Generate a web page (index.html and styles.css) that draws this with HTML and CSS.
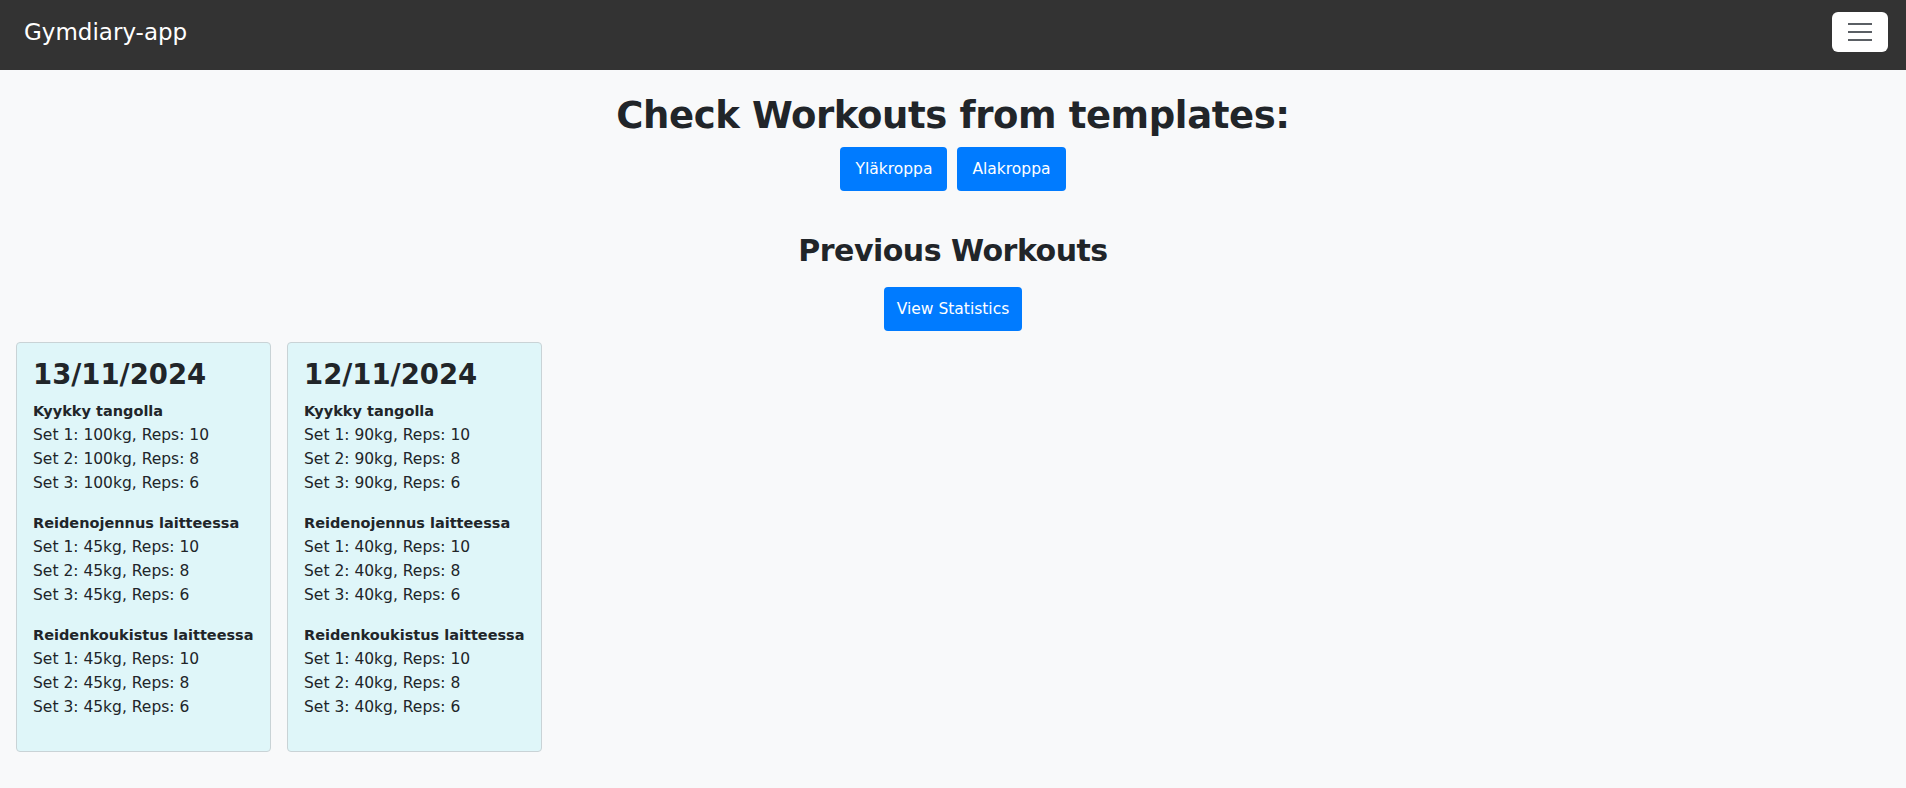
FILE: index.html
```html
<!DOCTYPE html>
<html lang="en">
<head>
<meta charset="utf-8">
<title>Gymdiary-app</title>
<link rel="stylesheet" href="styles.css">
</head>
<body>
<nav class="navbar">
  <span class="brand">Gymdiary-app</span>
  <button class="toggler" aria-label="Toggle navigation">
    <svg width="24" height="18" viewBox="0 0 24 18"><path d="M0 1h24M0 9h24M0 17h24" stroke="#5a5f64" stroke-width="2"/></svg>
  </button>
</nav>
<main class="main">
  <h1 class="title">Check Workouts from templates:</h1>
  <div class="btn-row">
    <button class="btn">Yläkroppa</button>
    <button class="btn">Alakroppa</button>
  </div>
  <h2 class="subtitle">Previous Workouts</h2>
  <div class="btn-row">
    <button class="btn btn-stats">View Statistics</button>
  </div>
  <div class="cards">
    <div class="card">
      <h3 class="date">13/11/2024</h3>
      <div class="exercise">
        <div class="ex-name">Kyykky tangolla</div>
        <div class="set">Set 1: 100kg, Reps: 10</div>
        <div class="set">Set 2: 100kg, Reps: 8</div>
        <div class="set">Set 3: 100kg, Reps: 6</div>
      </div>
      <div class="exercise">
        <div class="ex-name">Reidenojennus laitteessa</div>
        <div class="set">Set 1: 45kg, Reps: 10</div>
        <div class="set">Set 2: 45kg, Reps: 8</div>
        <div class="set">Set 3: 45kg, Reps: 6</div>
      </div>
      <div class="exercise">
        <div class="ex-name">Reidenkoukistus laitteessa</div>
        <div class="set">Set 1: 45kg, Reps: 10</div>
        <div class="set">Set 2: 45kg, Reps: 8</div>
        <div class="set">Set 3: 45kg, Reps: 6</div>
      </div>
    </div>
    <div class="card">
      <h3 class="date">12/11/2024</h3>
      <div class="exercise">
        <div class="ex-name">Kyykky tangolla</div>
        <div class="set">Set 1: 90kg, Reps: 10</div>
        <div class="set">Set 2: 90kg, Reps: 8</div>
        <div class="set">Set 3: 90kg, Reps: 6</div>
      </div>
      <div class="exercise">
        <div class="ex-name">Reidenojennus laitteessa</div>
        <div class="set">Set 1: 40kg, Reps: 10</div>
        <div class="set">Set 2: 40kg, Reps: 8</div>
        <div class="set">Set 3: 40kg, Reps: 6</div>
      </div>
      <div class="exercise">
        <div class="ex-name">Reidenkoukistus laitteessa</div>
        <div class="set">Set 1: 40kg, Reps: 10</div>
        <div class="set">Set 2: 40kg, Reps: 8</div>
        <div class="set">Set 3: 40kg, Reps: 6</div>
      </div>
    </div>
  </div>
</main>
</body>
</html>
```

FILE: styles.css
```css
* { box-sizing: border-box; }
html, body { margin: 0; padding: 0; }
body {
  background: #f8f9fa;
  color: #212529;
  font-family: "DejaVu Sans", "Liberation Sans", sans-serif;
  font-size: 15.5px;
  line-height: 1.5;
}
.navbar {
  height: 70px;
  background: #333333;
  display: flex;
  align-items: flex-start;
  justify-content: space-between;
  padding: 12px 18px 0 24px;
}
.brand {
  color: #ffffff;
  font-size: 23px;
  line-height: 40px;
}
.toggler {
  width: 56px;
  height: 40px;
  background: #ffffff;
  border: none;
  border-radius: 6px;
  display: flex;
  align-items: center;
  justify-content: center;
  padding: 0;
}
.main {
  display: flex;
  flex-direction: column;
  align-items: center;
  padding: 22px 16px 0;
}
.title {
  margin: 0 0 7px;
  font-size: 37px;
  letter-spacing: -0.4px;
  line-height: 48px;
  font-weight: bold;
}
.btn-row {
  display: flex;
  gap: 10px;
}
.btn {
  background: #007bff;
  color: #ffffff;
  border: none;
  border-radius: 4px;
  font-family: inherit;
  font-size: 15.5px;
  line-height: 24px;
  padding: 10px 15px;
  height: 44px;
}
.btn-stats {
  padding: 10px 13px;
}
.subtitle {
  margin: 41px 0 17px;
  font-size: 30px;
  letter-spacing: -0.5px;
  line-height: 38px;
  font-weight: bold;
}
.cards {
  align-self: stretch;
  display: flex;
  gap: 16px;
  margin-top: 11px;
}
.card {
  width: 255px;
  background: #dff6f9;
  border: 1px solid #c9d3d6;
  border-radius: 4px;
  padding: 14px 16px 16px;
  white-space: nowrap;
}
.date {
  margin: 0 0 8px;
  font-size: 27.5px;
  line-height: 34px;
  font-weight: bold;
}
.exercise {
  margin-bottom: 16px;
}
.ex-name {
  font-size: 14.5px;
  font-weight: bold;
  line-height: 24px;
}
.set {
  line-height: 24px;
}
```
